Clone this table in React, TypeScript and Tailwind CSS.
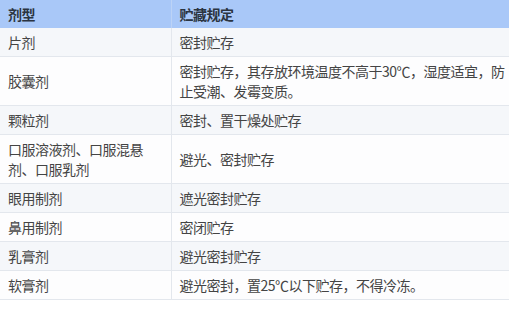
const rows: { type: string; rule: string }[] = [
  { type: "片剂", rule: "密封贮存" },
  { type: "胶囊剂", rule: "密封贮存，其存放环境温度不高于30℃，湿度适宜，防止受潮、发霉变质。" },
  { type: "颗粒剂", rule: "密封、置干燥处贮存" },
  { type: "口服溶液剂、口服混悬剂、口服乳剂", rule: "避光、密封贮存" },
  { type: "眼用制剂", rule: "遮光密封贮存" },
  { type: "鼻用制剂", rule: "密闭贮存" },
  { type: "乳膏剂", rule: "避光密封贮存" },
  { type: "软膏剂", rule: "避光密封，置25℃以下贮存，不得冷冻。" },
];

export default function App() {
  return (
    <div className="w-[509px] h-[318px] bg-white overflow-hidden font-['Noto_Sans_CJK_SC','Noto_Sans',sans-serif] text-[14px] tracking-[-0.5px] text-[#444]">
      <table className="w-full border-collapse table-fixed">
        <colgroup>
          <col className="w-[171px]" />
          <col />
        </colgroup>
        <thead>
          <tr className="bg-[#a9c8f8] text-[#2b3440] font-bold">
            <th className="text-left pl-2 pr-3 py-1 leading-5 h-[28px] border-r border-[#bcd3f6]">剂型</th>
            <th className="text-left pl-2 pr-0 py-1 leading-5 h-[28px]">贮藏规定</th>
          </tr>
        </thead>
        <tbody>
          {rows.map((row, i) => (
            <tr
              key={i}
              className={`border-b border-[#e3e7ed] ${i % 2 === 0 ? "bg-[#f5f7fa]" : "bg-[#fdfdfe]"}`}
            >
              <td className="pl-2 pr-3 py-1 leading-5 align-middle border-r border-[#e3e7ed]">{row.type}</td>
              <td className="pl-2 pr-0 py-1 leading-5 align-middle">{row.rule}</td>
            </tr>
          ))}
        </tbody>
      </table>
    </div>
  );
}
